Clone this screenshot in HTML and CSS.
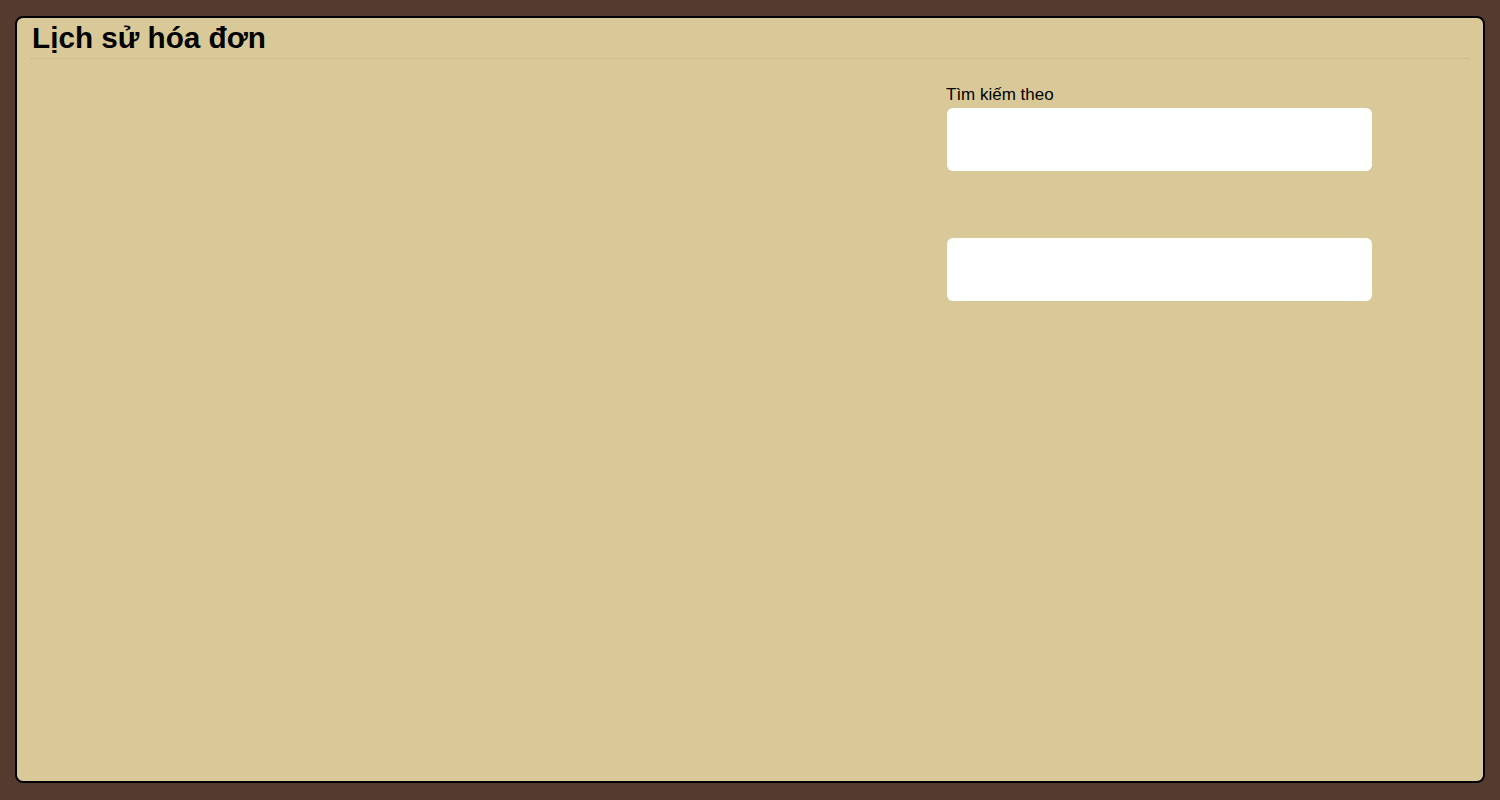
FILE: index.html
```html
<!DOCTYPE html>
<html lang="vi">
<head>
<meta charset="utf-8">
<title>Lịch sử hóa đơn</title>
<link rel="stylesheet" href="styles.css">
</head>
<body>
<main class="panel">
  <header class="panel-header">
    <h1 class="panel-title">Lịch sử hóa đơn</h1>
  </header>
  <section class="panel-body">
    <div class="results"></div>
    <form class="search">
      <div class="field">
        <label class="field-label" for="q1">Tìm kiếm theo</label>
        <input class="field-input" id="q1" type="text">
      </div>
      <div class="field field-second">
        <input class="field-input" id="q2" type="text">
      </div>
    </form>
  </section>
</main>
</body>
</html>
```
FILE: styles.css
```css
html, body {
  margin: 0;
  height: 100%;
}
body {
  background: #553a2f;
  padding: 16px 15px 17px 15px;
  box-sizing: border-box;
  font-family: "Liberation Sans", Arial, sans-serif;
  color: #000;
}
.panel {
  height: 100%;
  box-sizing: border-box;
  background: #d9c998;
  border: 2px solid #000;
  border-radius: 8px;
  display: flex;
  flex-direction: column;
}
.panel-header {
  margin: 0 14px 0 13px;
  padding: 3px 0 3px 2px;
  border-bottom: 1px solid #cdbd8c;
}
.panel-title {
  margin: 0;
  font-size: 29.7px;
  line-height: 34px;
  font-weight: bold;
}
.panel-body {
  display: flex;
  padding-top: 25px;
}
.results {
  flex: 1;
}
.search {
  width: 427px;
  margin-right: 110px;
}
.field-label {
  display: block;
  font-size: 17px;
  line-height: 20px;
  margin: 1px 0 3px;
}
.field-input {
  display: block;
  box-sizing: border-box;
  width: 425px;
  height: 63px;
  margin: 0 0 0 1px;
  border: 0;
  border-radius: 6px;
  background: #fff;
  padding: 0 12px;
  font: inherit;
}
.field-second {
  margin-top: 67px;
}
```
